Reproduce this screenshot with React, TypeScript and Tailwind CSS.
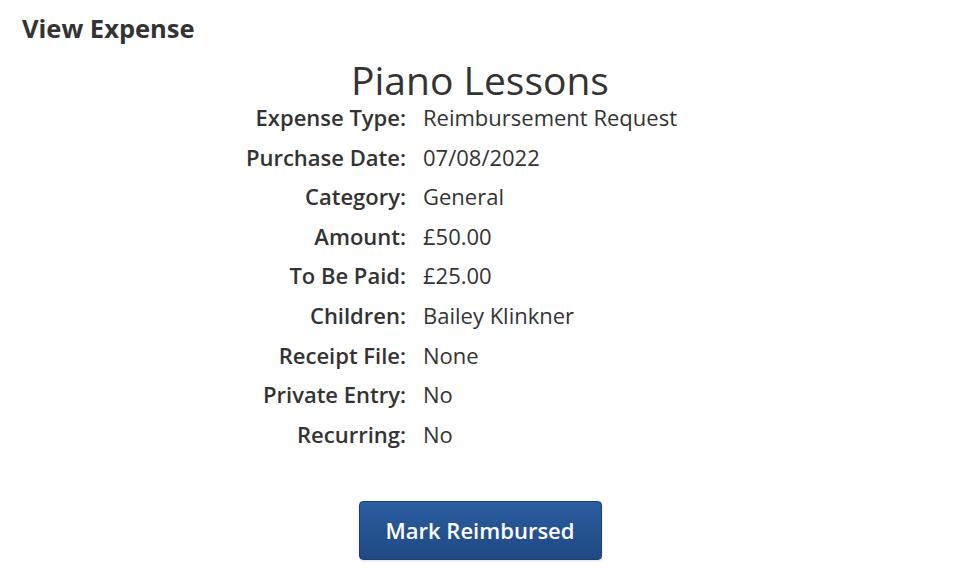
const rows: [string, string][] = [
  ['Expense Type:', 'Reimbursement Request'],
  ['Purchase Date:', '07/08/2022'],
  ['Category:', 'General'],
  ['Amount:', '£50.00'],
  ['To Be Paid:', '£25.00'],
  ['Children:', 'Bailey Klinkner'],
  ['Receipt File:', 'None'],
  ['Private Entry:', 'No'],
  ['Recurring:', 'No'],
];

export default function App() {
  return (
    <div className="min-h-[588px] w-[960px] bg-white text-[#333333] font-['Open_Sans',sans-serif]">
      {/* Header */}
      <div className="px-[22px] pt-[10px] text-[25.5px] font-bold leading-[36px]">View Expense</div>

      {/* Title */}
      <h1 className="text-center text-[39px] leading-[36px] mt-[16px]">Piano Lessons</h1>

      {/* Details */}
      <div className="grid grid-cols-[406px_1fr] gap-x-[17px] text-[22px] leading-[39.6px]">
        {rows.map(([label, value]) => (
          <div key={label} className="contents">
            <span className="text-right font-semibold">{label}</span>
            <span>{value}</span>
          </div>
        ))}
      </div>

      {/* Action */}
      <div className="flex justify-center mt-[47px]">
        <button className="w-[243px] h-[59px] rounded-[4px] border border-[#1a3f73] bg-gradient-to-b from-[#2b5da0] to-[#1f4983] text-white text-[22px] font-semibold shadow-sm">
          Mark Reimbursed
        </button>
      </div>
    </div>
  );
}
